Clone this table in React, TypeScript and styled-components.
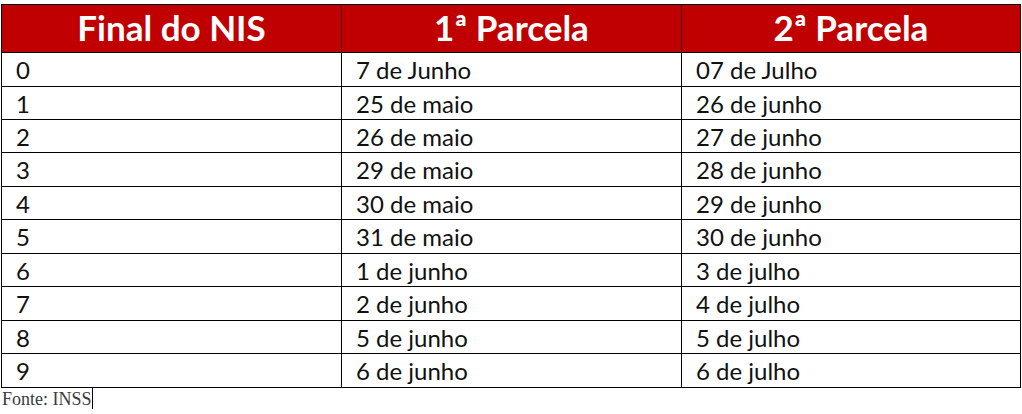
import React from "react";
import styled, { createGlobalStyle } from "styled-components";

const rows: [string, string, string, number][] = [
  ["0", "7 de Junho", "07 de Julho", 34],
  ["1", "25 de maio", "26 de junho", 33],
  ["2", "26 de maio", "27 de junho", 33],
  ["3", "29 de maio", "28 de junho", 34],
  ["4", "30 de maio", "29 de junho", 33],
  ["5", "31 de maio", "30 de junho", 34],
  ["6", "1 de junho", "3 de julho", 33],
  ["7", "2 de junho", "4 de julho", 34],
  ["8", "5 de junho", "5 de julho", 33],
  ["9", "6 de junho", "6 de julho", 34],
];

const GlobalStyle = createGlobalStyle`
  body {
    margin: 0;
    background: #fff;
  }
`;

const Page = styled.div`
  padding: 4px 0 0 1px;
`;

const Table = styled.div`
  width: 1020px;
  border-top: 1px solid #000;
  border-left: 1px solid #000;
  box-sizing: border-box;
`;

const Row = styled.div<{ $h: number; $head?: boolean }>`
  display: grid;
  grid-template-columns: 340px 340px 339px;
  height: ${(p) => p.$h}px;
  background: ${(p) => (p.$head ? "#c00000" : "#fff")};
`;

const HeadCell = styled.div`
  border-right: 1px solid #2a0000;
  border-bottom: 1px solid #000;
  display: flex;
  align-items: center;
  justify-content: center;
  color: #fff;
  font-family: Lato, "Liberation Sans", sans-serif;
  font-weight: 700;
  font-size: 35px;
  padding-bottom: 3px;
`;

const Cell = styled.div`
  border-right: 1px solid #000;
  border-bottom: 1px solid #000;
  display: flex;
  align-items: center;
  padding-left: 14px;
  color: #111;
  font-family: Lato, "Liberation Sans", sans-serif;
  font-size: 24px;
`;

const Source = styled.div`
  display: inline-block;
  font-family: "Liberation Serif", serif;
  font-size: 18px;
  color: #3a3a3a;
  padding: 2px 0 0 1px;
  line-height: 19px;
  border-right: 1px solid #000;
`;

export default function App() {
  return (
    <>
      <GlobalStyle />
      <Page>
        <Table>
          <Row $h={48} $head>
            <HeadCell>Final do NIS</HeadCell>
            <HeadCell>1ª Parcela</HeadCell>
            <HeadCell>2ª Parcela</HeadCell>
          </Row>
          {rows.map(([a, b, c, h]) => (
            <Row key={a} $h={h}>
              <Cell>{a}</Cell>
              <Cell>{b}</Cell>
              <Cell>{c}</Cell>
            </Row>
          ))}
        </Table>
        <Source>Fonte: INSS</Source>
      </Page>
    </>
  );
}
